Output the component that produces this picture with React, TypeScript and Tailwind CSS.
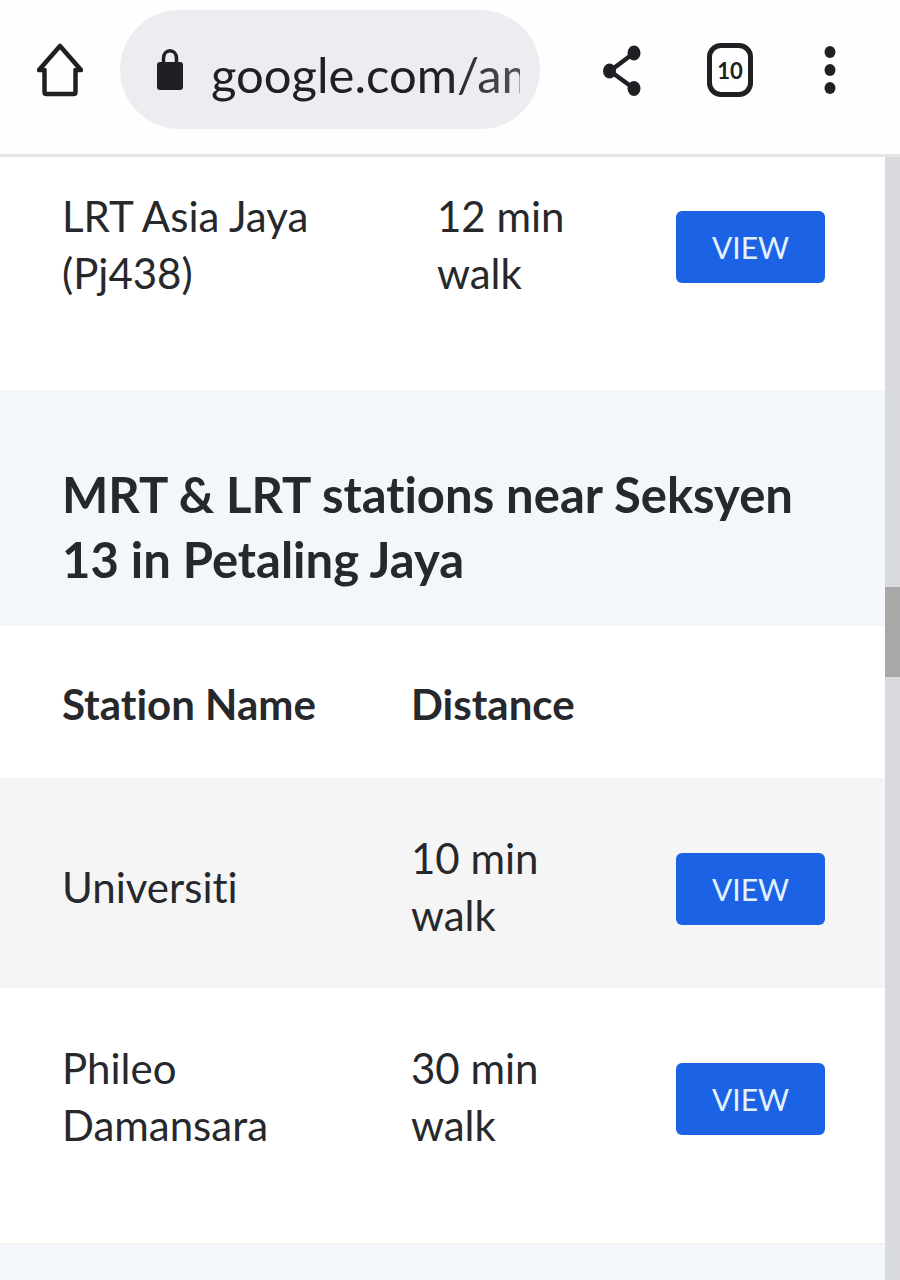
import React from "react";
import clsx from "clsx";

interface Station {
  name: string;
  distance: string;
}

const previousStations: Station[] = [
  { name: "LRT Asia Jaya (Pj438)", distance: "12 min walk" },
];

const nearbyStations: Station[] = [
  { name: "Universiti", distance: "10 min walk" },
  { name: "Phileo Damansara", distance: "30 min walk" },
];

function HomeIcon() {
  return (
    <svg viewBox="0 0 46 56" className="h-14 w-[46px]" fill="none" stroke="currentColor" strokeWidth="4.5">
      <path d="M2 28H7.500V50Q7.500 52 9.500 52H36.500Q38.500 52 38.500 50V28H44L23 4Z" strokeLinejoin="round" />
    </svg>
  );
}

function LockIcon() {
  return (
    <svg viewBox="0 0 28 44" className="h-11 w-7 shrink-0" fill="none">
      <path d="M7.500 17V10.500C7.500 0 20.500 0 20.500 10.500V17" stroke="currentColor" strokeWidth="3.500" />
      <rect x="1" y="14" width="26" height="28" rx="3" fill="currentColor" />
    </svg>
  );
}

function ShareIcon() {
  return (
    <svg viewBox="0 0 40 52" className="h-[52px] w-10" fill="currentColor">
      <path d="M32 9L8 27L32 44.500" fill="none" stroke="currentColor" strokeWidth="4.500" />
      <ellipse cx="32" cy="9" rx="6.500" ry="7.500" />
      <ellipse cx="7.500" cy="27" rx="6.500" ry="7.500" />
      <ellipse cx="32" cy="44.500" rx="6.500" ry="7.500" />
    </svg>
  );
}

function MoreIcon() {
  return (
    <svg viewBox="0 0 12 50" className="h-[50px] w-3" fill="currentColor">
      <ellipse cx="6" cy="7" rx="5.500" ry="6" />
      <ellipse cx="6" cy="25" rx="5.500" ry="6" />
      <ellipse cx="6" cy="43" rx="5.500" ry="6" />
    </svg>
  );
}

function BrowserBar() {
  return (
    <header className="flex h-[157px] items-start border-b-[3px] border-[#e4e4e5] bg-[#fefefe] pl-[37px] pr-6 pt-2.5 text-[#1f2023]">
      <button type="button" aria-label="Home" className="mt-8 shrink-0">
        <HomeIcon />
      </button>
      <div className="ml-[37px] flex h-[119px] min-w-0 flex-1 items-center rounded-full bg-[#ecedf0] pl-9 pr-5">
        <LockIcon />
        <input
          type="text"
          readOnly
          aria-label="Address"
          value="google.com/amp"
          className="ml-[27px] h-20 w-full min-w-0 bg-transparent pt-2 text-[49px] outline-none [mask-image:linear-gradient(to_right,black_75%,rgba(0,0,0,0.75))]"
        />
      </div>
      <div className="ml-[62px] mt-8 flex h-14 w-[274px] shrink-0 items-center">
        <button type="button" aria-label="Share">
          <ShareIcon />
        </button>
        <button
          type="button"
          aria-label="Open tabs"
          className="ml-[65px] h-[54px] w-[46px] rounded-[14px] border-[5px] border-current text-[22px] font-bold"
        >
          10
        </button>
        <button type="button" aria-label="More options" className="ml-[71px]">
          <MoreIcon />
        </button>
      </div>
    </header>
  );
}

function StationRow({ station, className }: { station: Station; className?: string }) {
  return (
    <tr className={clsx(className)}>
      <td className="pl-[62px] pr-12 pt-2">{station.name}</td>
      <td className="pr-12 pt-2">{station.distance}</td>
      <td className="pr-[60px] pt-3">
        <button type="button" className="block h-[72px] w-full rounded-md bg-[#1b63e4] text-[30px] text-[#e4f2ff]">
          VIEW
        </button>
      </td>
    </tr>
  );
}

export default function App() {
  return (
    <div className="flex min-h-screen flex-col bg-white font-['Lato',sans-serif] text-[#26282b] [font-variant-ligatures:none]">
      <BrowserBar />
      <div className="flex flex-1">
        <main className="flex min-w-0 flex-1 flex-col text-[42px] leading-[57px]">
          <table className="mb-[65px] w-full table-fixed">
            <colgroup>
              <col />
              <col className="w-[239px]" />
              <col className="w-[209px]" />
            </colgroup>
            <tbody>
              {previousStations.map((station) => (
                <StationRow key={station.name} station={station} className="h-[168px]" />
              ))}
            </tbody>
          </table>

          <section className="bg-[#f3f6fa] pb-[34px] pl-[62px] pr-10 pt-[72px]">
            <h2 className="text-[49px] font-bold leading-[65px]">
              MRT &amp; LRT stations near Seksyen 13 in Petaling Jaya
            </h2>
          </section>

          <table className="mb-[45px] w-full table-fixed">
            <colgroup>
              <col />
              <col className="w-[265px]" />
              <col className="w-[209px]" />
            </colgroup>
            <thead>
              <tr className="h-[152px] text-left">
                <th className="pl-[62px] pt-1">Station Name</th>
                <th className="pt-1">Distance</th>
                <td />
              </tr>
            </thead>
            <tbody>
              {nearbyStations.map((station) => (
                <StationRow key={station.name} station={station} className="h-[210px] odd:bg-[#f5f5f5]" />
              ))}
            </tbody>
          </table>

          <div className="min-h-9 flex-1 border-t-2 border-[#f2f2f2] bg-[#f3f6fa]" />
        </main>

        {/* Page scrollbar */}
        <div className="w-[15px] shrink-0 bg-[#d9dadd]">
          <div className="mt-[430px] h-[90px] bg-[#a8a8a9]" />
        </div>
      </div>
    </div>
  );
}
